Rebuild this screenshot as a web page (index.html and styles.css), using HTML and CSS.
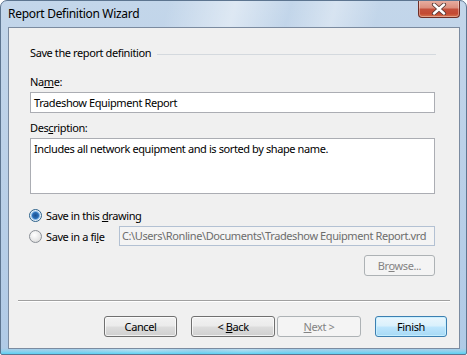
FILE: index.html
```html
<!DOCTYPE html>
<html>
<head>
<meta charset="utf-8">
<link rel="stylesheet" href="styles.css">
</head>
<body>
<div class="window">
  <div class="titlebar">
    <span class="title">Report Definition Wizard</span>
    <div class="close">
      <svg width="16" height="12" viewBox="0 0 16 12">
        <path d="M3 1.5 L13 10.5 M13 1.5 L3 10.5" stroke="#5a3a36" stroke-width="4.2" stroke-linecap="round"/>
        <path d="M3 1.5 L13 10.5 M13 1.5 L3 10.5" stroke="#ffffff" stroke-width="2.4" stroke-linecap="round"/>
      </svg>
    </div>
  </div>
  <div class="client">
    <div class="content">
      <div class="group-head"><span>Save the report definition</span><span class="rule"></span></div>
      <div class="lbl first">Na<u>m</u>e:</div>
      <div class="field">Tradeshow Equipment Report</div>
      <div class="lbl">Des<u>c</u>ription:</div>
      <div class="field area">Includes all network equipment and is sorted by shape name.</div>
      <div class="radio-row one"><span class="radio checked"></span><span>Save in this <u>d</u>rawing</span></div>
      <div class="radio-row two"><span class="radio"></span><span class="rtext">Save in a fi<u>l</u>e</span><div class="path">C:\Users\Ronline\Documents\Tradeshow Equipment Report.vrd</div></div>
      <div class="browse-row"><div class="btn disabled browse">Br<u>o</u>wse...</div></div>
    </div>
    <div class="footer">
      <div class="sep"></div>
      <div class="buttons">
        <div class="btn cancel">Cancel</div>
        <div class="btn back">&lt; <u>B</u>ack</div>
        <div class="btn disabled next"><u>N</u>ext &gt;</div>
        <div class="btn default finish">Finish</div>
      </div>
    </div>
  </div>
</div>
</body>
</html>
```

FILE: styles.css
```css
html, body {
  margin: 0;
  padding: 0;
  background: #ffffff;
}
body {
  font-family: "Noto Sans", "Open Sans", sans-serif;
  font-size: 11px;
  letter-spacing: -0.4px;
  color: #000;
}
.window {
  box-sizing: border-box;
  width: 467px;
  height: 355px;
  display: flex;
  flex-direction: column;
  border: 1px solid #5d7590;
  border-radius: 7px 7px 2px 2px;
  background:
    linear-gradient(0deg, rgba(80,210,245,0.9) 0px, rgba(120,215,240,0.5) 3px, rgba(255,255,255,0) 6px),
    linear-gradient(105deg, rgba(255,255,255,0) 30%, rgba(255,255,255,0.45) 42%, rgba(255,255,255,0) 52%, rgba(255,255,255,0.35) 60%, rgba(255,255,255,0) 68%),
    linear-gradient(180deg, #c3d6ea 0%, #bcd1e8 40%, #b0cae6 100%);
  overflow: hidden;
}
.titlebar {
  height: 26px;
  display: flex;
  align-items: flex-start;
}
.title {
  margin: 5px 0 0 7px;
  font-size: 12px;
  letter-spacing: -0.3px;
  line-height: 16px;
  color: #000;
}
.close {
  margin-left: auto;
  margin-right: 6px;
  margin-top: -1px;
  box-sizing: border-box;
  width: 42px;
  height: 18px;
  border: 1px solid #6e2e26;
  border-top: none;
  border-radius: 0 0 4px 4px;
  background: linear-gradient(180deg, #e9b1a4 0%, #dc8f7e 45%, #c4503c 55%, #c34a33 80%, #d7744f 100%);
  box-shadow: inset 0 0 0 1px rgba(255,255,255,0.35);
  display: flex;
  align-items: center;
  justify-content: center;
}
.close svg { display: block; }
.client {
  flex: 1;
  margin: 0 6px 5px 7px;
  border: 1px solid #7b8ba0;
  background: #f0f0f0;
  display: flex;
  flex-direction: column;
}
.content {
  padding: 17px 24px 0 21px;
  display: flex;
  flex-direction: column;
  flex: 1;
}
.group-head {
  display: flex;
  align-items: center;
  line-height: 16px;
  height: 16px;
}
.group-head .rule {
  flex: 1;
  height: 1px;
  background: #d4d9de;
  margin-left: 6px;
  margin-right: -1px;
  margin-top: 3px;
}
.lbl {
  line-height: 16px;
  margin-top: 7px;
}
.lbl.first { margin-top: 13px; }
.field {
  margin-top: 2px;
  box-sizing: border-box;
  height: 21px;
  border: 1px solid #abadb3;
  background: #fff;
  padding: 0 3px;
  line-height: 19px;
  white-space: nowrap;
}
.field.area {
  height: 56px;
  padding-top: 2px;
  line-height: 16px;
}
.radio-row {
  display: flex;
  align-items: center;
  margin-left: -1px;
  height: 16px;
}
.radio-row.one { margin-top: 13px; }
.radio-row.two { margin-top: 3px; height: 20px; }
.radio {
  box-sizing: border-box;
  width: 13px;
  height: 13px;
  border-radius: 50%;
  border: 1px solid #8a8f96;
  background: radial-gradient(circle at 40% 35%, #ffffff 0%, #e6e6e6 60%, #d2d2d2 100%);
  margin-right: 4px;
  flex: none;
}
.radio.checked {
  border-color: #2c628b;
  background: radial-gradient(circle at 50% 50%, #1d4f8e 0px, #2a6fb8 3px, #86b7e6 4px, #e6f0fa 5px, #f4f4f4 7px);
}
.rtext { width: 73px; flex: none; }
.path {
  flex: 1;
  box-sizing: border-box;
  height: 20px;
  border: 1px solid #b3c1d3;
  background: #f4f4f4;
  color: #6d6d6d;
  line-height: 18px;
  padding: 0 2px;
  white-space: nowrap;
  overflow: hidden;
}
.browse-row {
  display: flex;
  justify-content: flex-end;
  margin-top: 9px;
}
.btn {
  box-sizing: border-box;
  height: 21px;
  border: 1px solid #707070;
  border-radius: 3px;
  background: linear-gradient(180deg, #f2f2f2 0%, #ebebeb 48%, #dddddd 52%, #cfcfcf 100%);
  box-shadow: inset 0 0 0 1px rgba(255,255,255,0.7);
  text-align: center;
  line-height: 19px;
  color: #000;
}
.btn.disabled {
  border-color: #adb2b5;
  background: #f4f4f4;
  box-shadow: none;
  color: #838383;
}
.btn.default {
  border-color: #3c7fb1;
  background: linear-gradient(180deg, #eaf6fd 0%, #d9f0fc 48%, #bee6fd 52%, #a7d9f5 100%);
  box-shadow: inset 0 0 0 1px rgba(200,240,255,0.9);
}
.browse { width: 71px; margin-right: 0; }
.footer {
  padding: 0 9px 11px 9px;
}
.sep {
  height: 1px;
  background: #a0a0a0;
  border-bottom: 1px solid #ffffff;
}
.buttons {
  display: flex;
  justify-content: flex-end;
  margin-top: 14px;
  padding-right: 3px;
}
.cancel { width: 73px; margin-right: 14px; }
.back { width: 84px; margin-right: 2px; }
.next { width: 84px; margin-right: 14px; }
.finish { width: 72px; }
u { text-decoration: underline; text-underline-offset: 1px; }
```
